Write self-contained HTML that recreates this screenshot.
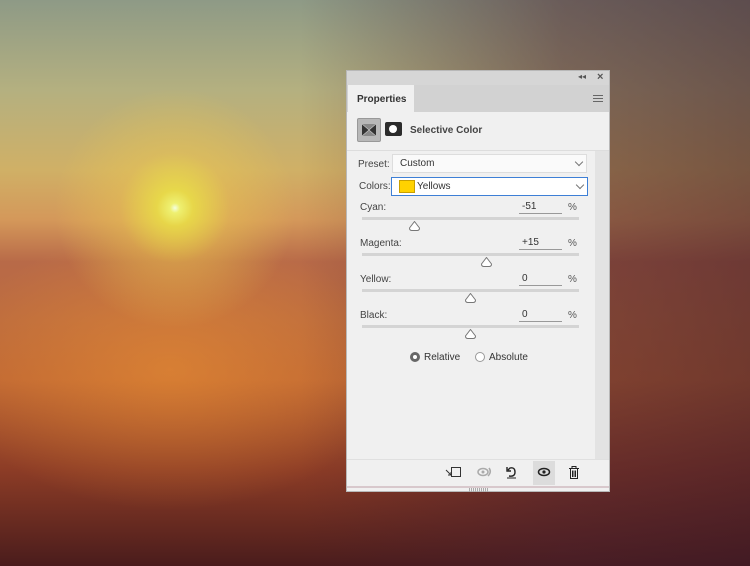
<!DOCTYPE html>
<html><head><meta charset="utf-8"><style>
*{margin:0;padding:0;box-sizing:border-box}
body{width:750px;height:566px;overflow:hidden;position:relative;font-family:"Liberation Sans",sans-serif;font-size:10px;color:#333;
background:
radial-gradient(circle at 175px 208px,#f4ffe0 0,#eef070 5px,rgba(235,225,70,.85) 18px,rgba(235,200,80,.45) 55px,rgba(230,170,70,0) 120px),
radial-gradient(ellipse 220px 140px at 170px 370px,rgba(235,145,50,.55),rgba(230,120,40,0)),
linear-gradient(90deg,rgba(0,0,0,0) 0,rgba(0,0,0,0) 40%,rgba(70,30,45,.5) 75%,rgba(60,25,40,.6) 100%),
linear-gradient(180deg,#8e9a86 0,#b4b080 90px,#d0b066 170px,#d4985a 220px,#b86a48 262px,#bd6c3e 320px,#c06834 380px,#8c3c26 470px,#4a1c1c 566px);}
.panel{position:absolute;left:346px;top:70px;width:264px;height:422px;background:#f0f0f0;border:1px solid #b8b8b8}
.tb{position:absolute;left:0;top:0;width:262px;height:14px;background:#d6d6d6}
.tabs{position:absolute;left:0;top:14px;width:262px;height:27px;background:#d2d2d2}
.tab{position:absolute;left:1px;top:0;width:66px;height:27px;background:#f0f0f0;font-weight:bold;font-size:10px;padding:9px 0 0 9px;color:#333}
.abs{position:absolute}
.dd{position:absolute;background:#fafafa;border:1px solid #ddd;height:19px;font-size:10px;padding:3px 0 0 7px}
.chev{position:absolute;right:4px;top:4px;width:6px;height:6px;border-right:1px solid #777;border-bottom:1px solid #777;transform:rotate(45deg)}
.lbl{position:absolute;left:13px;font-size:10px;color:#444}
.val{position:absolute;left:172px;width:43px;border-bottom:1px solid #999;font-size:10px;padding-left:3px;height:13px}
.pct{position:absolute;left:221px;font-size:10px;color:#555}
.track{position:absolute;left:15px;width:217px;height:3px;background:#d4d4d4}
.thumb{position:absolute;width:11px;height:10px}
</style></head><body>
<div class="panel">
 <div class="tb"><span class="abs" style="left:231px;top:1px;font-size:8px;color:#555">◂◂</span><span class="abs" style="left:250px;top:0px;font-size:11px;color:#555;font-weight:bold">×</span></div>
 <div class="tabs"><div class="tab">Properties</div>
  <div class="abs" style="left:246px;top:10px;width:10px;height:7px;border-top:1px solid #666;border-bottom:1px solid #666"><div style="margin-top:2px;border-top:1px solid #666"></div></div></div>
 <div class="abs" style="left:10px;top:47px;width:24px;height:24px;background:#b8b8b8;border:1px solid #999;border-radius:2px"><svg width="22" height="22"><rect x="4" y="5" width="14" height="12" fill="#333"/><path d="M4 5 L11 11 L18 5 M4 17 L11 11 L18 17" fill="#888" stroke="#ccc" stroke-width=".6"/></svg></div>
 <div class="abs" style="left:38px;top:51px;width:17px;height:14px;background:#2c2c2c;border-radius:2px"><div style="position:absolute;left:4px;top:3px;width:8px;height:8px;border-radius:50%;background:#fff"></div></div>
 <div class="abs" style="left:63px;top:54px;font-weight:bold;font-size:10px;color:#444">Selective Color</div>
 <div class="abs" style="left:0;top:79px;width:262px;height:1px;background:#ddd"></div>
 <div class="abs" style="left:248px;top:80px;width:14px;height:308px;background:#e3e3e3"></div>
 <div class="lbl" style="left:11px;top:88px">Preset:</div>
 <div class="dd" style="left:45px;top:83px;width:195px">Custom<div class="chev"></div></div>
 <div class="lbl" style="left:12px;top:110px">Colors:</div>
 <div class="dd" style="left:44px;top:106px;width:197px;height:19px;border-color:#3d7fd6;background:#fff;padding-left:25px">Yellows<div class="abs" style="left:7px;top:2px;width:16px;height:13px;background:#ffd200;border:1px solid #c9a000"></div><div class="chev"></div></div>
 <div class="lbl" style="top:131px">Cyan:</div><div class="val" style="top:130px">-51</div><div class="pct" style="top:131px">%</div>
 <div class="track" style="top:146px"></div>
 <div class="lbl" style="top:167px">Magenta:</div><div class="val" style="top:166px">+15</div><div class="pct" style="top:167px">%</div>
 <div class="track" style="top:182px"></div>
 <div class="lbl" style="top:203px">Yellow:</div><div class="val" style="top:202px">0</div><div class="pct" style="top:203px">%</div>
 <div class="track" style="top:218px"></div>
 <div class="lbl" style="top:239px">Black:</div><div class="val" style="top:238px">0</div><div class="pct" style="top:239px">%</div>
 <div class="track" style="top:254px"></div>
 <svg class="thumb" style="left:62px;top:150px" viewBox="0 0 11 10"><path d="M5.5 .5 L10.5 7 Q10.5 9.5 8 9.5 H3 Q.5 9.5 .5 7 Z" fill="#fff" stroke="#777"/></svg>
 <svg class="thumb" style="left:134px;top:186px" viewBox="0 0 11 10"><path d="M5.5 .5 L10.5 7 Q10.5 9.5 8 9.5 H3 Q.5 9.5 .5 7 Z" fill="#fff" stroke="#777"/></svg>
 <svg class="thumb" style="left:118px;top:222px" viewBox="0 0 11 10"><path d="M5.5 .5 L10.5 7 Q10.5 9.5 8 9.5 H3 Q.5 9.5 .5 7 Z" fill="#fff" stroke="#777"/></svg>
 <svg class="thumb" style="left:118px;top:258px" viewBox="0 0 11 10"><path d="M5.5 .5 L10.5 7 Q10.5 9.5 8 9.5 H3 Q.5 9.5 .5 7 Z" fill="#fff" stroke="#777"/></svg>
 <div class="abs" style="left:63px;top:281px;width:10px;height:10px;border-radius:50%;background:#fff;border:3px solid #666"></div>
 <div class="abs" style="left:77px;top:281px;font-size:10px">Relative</div>
 <div class="abs" style="left:128px;top:281px;width:10px;height:10px;border-radius:50%;background:#fff;border:1px solid #999"></div>
 <div class="abs" style="left:142px;top:281px;font-size:10px">Absolute</div>
 <div class="abs" style="left:0;top:388px;width:262px;height:1px;background:#e0e0e0"></div>
 <div class="abs" style="left:186px;top:390px;width:22px;height:24px;background:#dcdcdc"></div>
 <svg class="abs" style="left:98px;top:394px" width="140" height="16">
  <rect x="6.5" y="2.5" width="9" height="9" fill="none" stroke="#333"/><path d="M1 5 L6 10 M3 10 H6 V7" stroke="#333" fill="none"/>
  <ellipse cx="38" cy="7" rx="5" ry="3.5" fill="none" stroke="#aaa" stroke-width="1.5"/><circle cx="38" cy="7" r="1.5" fill="#aaa"/><path d="M44 3 Q47 7 43 11" stroke="#aaa" fill="none" stroke-width="1.5"/>
  <path d="M64 11 Q70 12 70 7 Q70 2 65 3 L63 5 M62 2 L62 6 L66 6" stroke="#222" fill="none" stroke-width="1.4"/><path d="M62 13 H71" stroke="#222"/>
  <ellipse cx="99" cy="7" rx="5.5" ry="3.5" fill="none" stroke="#222" stroke-width="1.5"/><circle cx="99" cy="7" r="1.6" fill="#222"/>
  <path d="M124 3.5 H134 M127 3.5 V1.5 H131 V3.5 M125.5 4 V13.5 H132.5 V4 M127.5 5.5 V12 M129 5.5 V12 M130.5 5.5 V12" stroke="#222" fill="none"/>
 </svg>
 <div class="abs" style="left:0;top:415px;width:262px;height:2px;background:#d8c8cc"></div>
 <div class="abs" style="left:122px;top:417px;width:20px;height:4px;background:repeating-linear-gradient(90deg,#aaa 0 1px,transparent 1px 2px)"></div>
</div>
</body></html>
